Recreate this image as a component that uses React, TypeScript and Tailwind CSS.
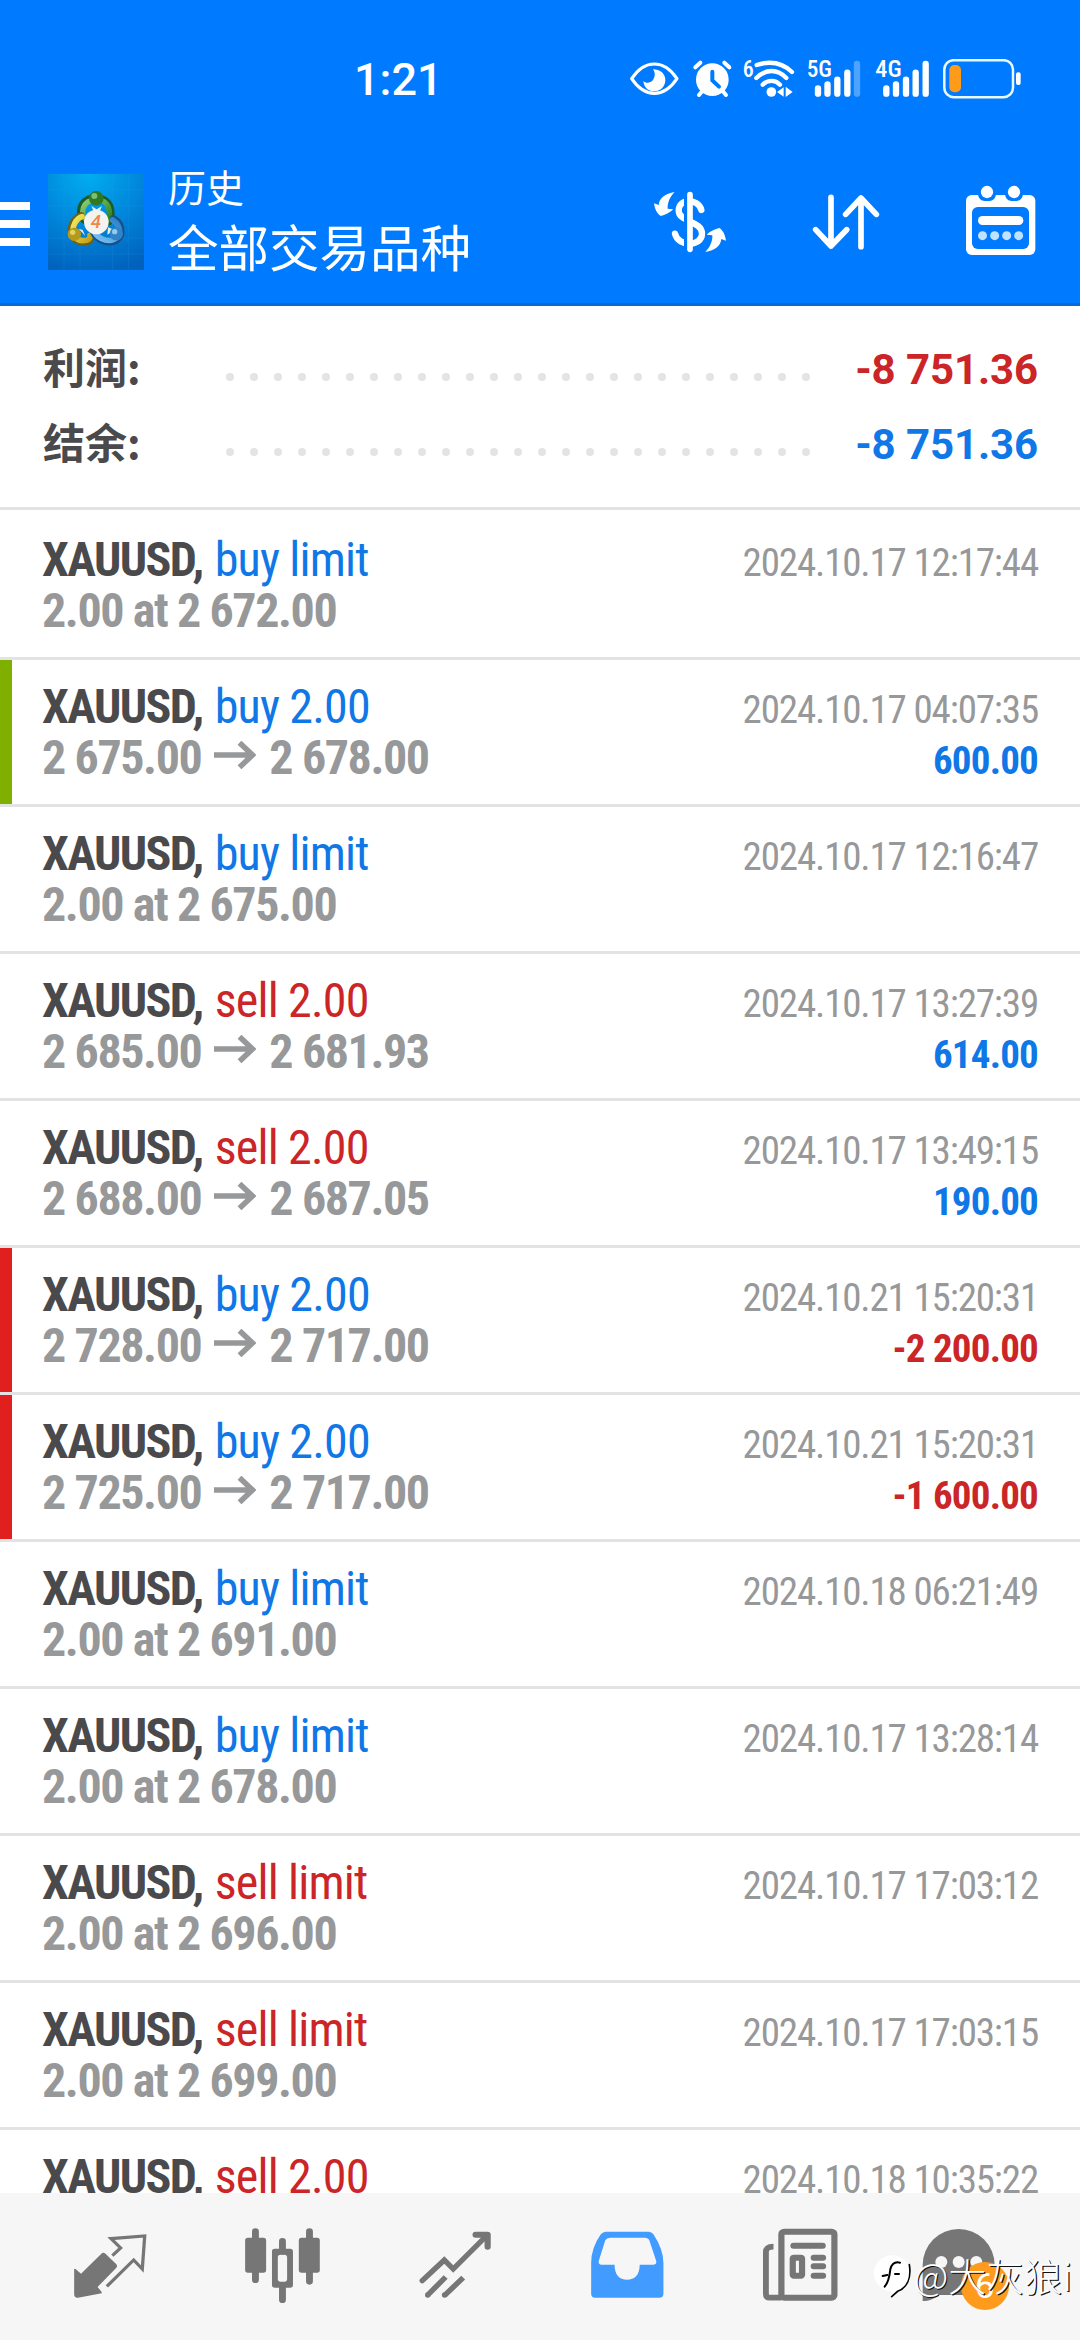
import type { ReactNode } from "react";

type Side = "buy" | "sell";
type Bar = "none" | "green" | "red";

interface Deal {
  side: Side;
  label: string;
  time: string;
  price: string;
  close?: string;
  profit?: string;
  bar?: Bar;
}

const deals: Deal[] = [
  { side: "buy", label: "buy limit", time: "2024.10.17 12:17:44", price: "2.00 at 2 672.00" },
  { side: "buy", label: "buy 2.00", time: "2024.10.17 04:07:35", price: "2 675.00", close: "2 678.00", profit: "600.00", bar: "green" },
  { side: "buy", label: "buy limit", time: "2024.10.17 12:16:47", price: "2.00 at 2 675.00" },
  { side: "sell", label: "sell 2.00", time: "2024.10.17 13:27:39", price: "2 685.00", close: "2 681.93", profit: "614.00" },
  { side: "sell", label: "sell 2.00", time: "2024.10.17 13:49:15", price: "2 688.00", close: "2 687.05", profit: "190.00" },
  { side: "buy", label: "buy 2.00", time: "2024.10.21 15:20:31", price: "2 728.00", close: "2 717.00", profit: "-2 200.00", bar: "red" },
  { side: "buy", label: "buy 2.00", time: "2024.10.21 15:20:31", price: "2 725.00", close: "2 717.00", profit: "-1 600.00", bar: "red" },
  { side: "buy", label: "buy limit", time: "2024.10.18 06:21:49", price: "2.00 at 2 691.00" },
  { side: "buy", label: "buy limit", time: "2024.10.17 13:28:14", price: "2.00 at 2 678.00" },
  { side: "sell", label: "sell limit", time: "2024.10.17 17:03:12", price: "2.00 at 2 696.00" },
  { side: "sell", label: "sell limit", time: "2024.10.17 17:03:15", price: "2.00 at 2 699.00" },
  { side: "sell", label: "sell 2.00", time: "2024.10.18 10:35:22", price: "" },
];

const barClass: Record<Bar, string> = {
  none: "bg-transparent",
  green: "bg-[#7fb000]",
  red: "bg-[#e11f1f]",
};

function StatusBar() {
  return (
    <div className="flex h-[120px] items-start text-white">
      <div className="ml-[354px] mt-[52px] w-[275px] font-['Roboto'] text-[45px] font-medium leading-[56px] tracking-[0px]">1:21</div>
      {/* eye comfort */}
      <svg className="mt-[59px] h-10 w-[60.67px] shrink-0" viewBox="88 58 182 120" fill="none">
        <path d="M96 117 C118 84 140 73 164 73 C188 73 210 84 232 117 C210 150 188 161 164 161 C140 161 118 150 96 117Z" stroke="#fff" strokeWidth="9.5" strokeLinejoin="round" />
        <path d="M160 89 C185 90 197 104 197 121 C197 141 182 155 163 155 C145 155 133 143 131 124 C138 132 152 131 160 121 C167 111 167 98 160 89Z" fill="#fff" />
      </svg>
      {/* alarm */}
      <svg className="mt-[59px] h-10 w-[51.67px] shrink-0" viewBox="270 58 155 120" fill="none" strokeLinecap="round">
        <path d="M286 83 L301 69 M388 83 L373 69" stroke="#fff" strokeWidth="12" />
        <path d="M297 166 L312 148 M378 166 L363 148" stroke="#fff" strokeWidth="12" />
        <circle cx="337" cy="120" r="49" fill="#fff" />
        <path d="M337 96 V122 L357 141" stroke="#007aff" strokeWidth="12" />
      </svg>
      {/* wifi */}
      <svg className="mt-[59px] h-10 w-[61.67px] shrink-0 overflow-visible" viewBox="425 58 185 120" fill="none">
        <text x="430" y="111" fill="#fff" fontFamily="Roboto Condensed" fontWeight="500" fontSize="70" textLength="33" lengthAdjust="spacingAndGlyphs">6</text>
        <path d="M472 76 C512 63 550 70 578 97" stroke="#fff" strokeWidth="13" strokeLinecap="round" />
        <path d="M471 115 C500 87 534 87 561 115" stroke="#fff" strokeWidth="13" strokeLinecap="round" />
        <path d="M490 135 C505 120 528 120 542 135" stroke="#fff" strokeWidth="13" strokeLinecap="round" />
        <circle cx="516" cy="157" r="14.5" fill="#fff" />
        <path d="M533 157 L553 143 V171Z M559 141 L580 157 L559 172Z" fill="#fff" />
      </svg>
      {/* 5G */}
      <svg className="mt-[59px] h-10 w-[66.67px] shrink-0 overflow-visible" viewBox="610 58 200 120" fill="none" stroke="#fff" strokeWidth="19" strokeLinecap="round">
        <text x="621" y="112" stroke="none" fill="#fff" fontFamily="Roboto Condensed" fontWeight="500" fontSize="70" textLength="76" lengthAdjust="spacingAndGlyphs">5G</text>
        <path d="M655 146 V162 M683.500 134 V162 M713 120 V162 M743 99 V162" />
        <path d="M772 73 V162" stroke="#4ea3ff" />
      </svg>
      {/* 4G */}
      <svg className="mt-[59px] h-10 w-[70px] shrink-0 overflow-visible" viewBox="810 58 210 120" fill="none" stroke="#fff" strokeWidth="19" strokeLinecap="round">
        <text x="826" y="112" stroke="none" fill="#fff" fontFamily="Roboto Condensed" fontWeight="500" fontSize="70" textLength="79" lengthAdjust="spacingAndGlyphs">4G</text>
        <path d="M859 146 V162 M888 134 V162 M918 120 V162 M947 99 V162 M977 73 V162" />
      </svg>
      {/* battery */}
      <svg className="mt-[59px] h-10 w-[83.33px] shrink-0" viewBox="1020 58 250 120" fill="none">
        <rect x="1033" y="61.500" width="206" height="111" rx="28" stroke="#e8faff" strokeWidth="7.500" />
        <rect x="1048" y="76" width="35" height="82" rx="15" fill="#ff9b1a" />
        <rect x="1248" y="98" width="14" height="38" rx="6" fill="#fff" />
      </svg>
    </div>
  );
}

function AppLogo() {
  return (
    <svg className="ml-[18px] mt-3 size-24 shrink-0" viewBox="144 72 288 288">
      <defs>
        <radialGradient id="sky" cx="0.42" cy="0" r="1.05">
          <stop offset="0" stopColor="#00aef0" />
          <stop offset="0.5" stopColor="#0088dc" />
          <stop offset="1" stopColor="#0062bd" />
        </radialGradient>
        <linearGradient id="green" x1="0" y1="0" x2="1" y2="1">
          <stop offset="0" stopColor="#8fd07c" />
          <stop offset="1" stopColor="#2a7f1d" />
        </linearGradient>
        <linearGradient id="gold" x1="0" y1="0" x2="1" y2="1">
          <stop offset="0" stopColor="#f6ec62" />
          <stop offset="1" stopColor="#c4a112" />
        </linearGradient>
        <linearGradient id="azure" x1="1" y1="0" x2="0" y2="1">
          <stop offset="0" stopColor="#2a7fc8" />
          <stop offset="1" stopColor="#7cc4f4" />
        </linearGradient>
      </defs>
      <rect x="144" y="72" width="288" height="288" fill="url(#sky)" />
      <path d="M192 72V360M240 72V360M338 72V360M386 72V360M144 120H432M144 168H432M144 264H432M144 312H432" stroke="#2aa0e8" strokeOpacity="0.18" strokeWidth="3" />
      <g fill="none" strokeLinecap="round">
        <path d="M262 214 C243 212 238 188 243 171 C250 152 268 143 290 143 C314 143 330 160 333 180 C335 192 334 205 328 215" stroke="#1d5c22" strokeWidth="20" />
        <path d="M262 208 C247 206 246 188 250 174 C256 157 270 149 290 149 C312 149 325 163 328 182 C329 192 329 202 325 210" stroke="url(#green)" strokeWidth="16" />
        <path d="M244 196 C222 204 212 224 212 246 C214 270 238 280 262 276 C272 274 277 266 274 258" stroke="#6f6015" strokeWidth="19" />
        <path d="M246 200 C228 206 218 226 218 246 C220 266 240 275 260 271 C268 269 272 262 270 256" stroke="url(#gold)" strokeWidth="17" />
        <path d="M340 204 C358 214 366 232 364 252 C358 274 336 280 314 275 C296 270 284 258 279 246" stroke="#174f8c" strokeWidth="19" />
        <path d="M338 210 C354 220 360 234 358 250 C352 268 334 274 316 270 C300 266 289 256 283 246" stroke="url(#azure)" strokeWidth="17" />
      </g>
      <path d="M236 236 L256 258 L248 240Z M324 232 L344 240 L322 254Z M274 168 L290 178 L306 168 L300 182 H280Z" fill="#dfeee4" />
      <circle cx="289" cy="145" r="22" fill="#2d7a22" />
      <circle cx="283" cy="138" r="9" fill="#9ad48b" opacity="0.75" />
      <circle cx="223" cy="253" r="20" fill="#b39a1d" />
      <circle cx="218" cy="247" r="8" fill="#f1e47a" opacity="0.75" />
      <circle cx="349" cy="251" r="20" fill="#2f83c6" />
      <circle cx="344" cy="245" r="8" fill="#b5e0fa" opacity="0.75" />
      <circle cx="289" cy="216" r="37" fill="#f4f3f0" />
      <text x="288" y="235" textAnchor="middle" fill="#f0884c" fontFamily="Roboto" fontStyle="italic" fontWeight="500" fontSize="56">4</text>
    </svg>
  );
}

function AppBar() {
  return (
    <div className="flex h-[186px] items-start border-b-[3px] border-[#0a6bd6] pt-[42px] text-white">
      <div className="mt-10 flex w-[30px] shrink-0 flex-col gap-[10px]">
        <div className="h-2 bg-white" />
        <div className="h-2 bg-white" />
        <div className="h-2 bg-white" />
      </div>
      <AppLogo />
      <div className="ml-[24px] w-[482px] font-['Noto_Sans_CJK_SC',sans-serif]">
        <div className="text-[38px] leading-[48px]">历史</div>
        <div className="text-[50.5px] leading-[71px]">全部交易品种</div>
      </div>
      <svg className="mt-[18px] h-20 w-20 shrink-0" viewBox="90 60 240 240" fill="none">
        <path d="M244 150 C236 116 176 112 176 152 C176 186 246 182 246 221 C246 260 174 262 165 221" stroke="#fff" strokeWidth="19" strokeLinecap="round" />
        <rect x="192" y="96" width="12" height="180" fill="#007aff" />
        <path d="M210 104 V268" stroke="#fff" strokeWidth="17" strokeLinecap="round" />
        <path d="M164 96 C135 100 118 115 116 135 L102 130 C105 150 112 162 122 168 C135 165 150 158 160 148 L143 146 C142 128 150 110 164 96Z" fill="#fff" />
        <path d="M256 276 C285 272 302 257 304 237 L318 242 C315 222 308 210 298 204 C285 207 270 214 260 224 L277 226 C278 244 270 262 256 276Z" fill="#fff" />
      </svg>
      <svg className="ml-[75px] mt-[18px] h-20 w-20 shrink-0" viewBox="555 60 240 240" fill="none" stroke="#fff" strokeWidth="17" strokeLinecap="round" strokeLinejoin="round">
        <path d="M633 112 V258 M587 209 L633 258 L680 209" />
        <path d="M723 260 V114 M677 163 L723 114 L769 163" />
      </svg>
      <svg className="ml-[75px] mt-[18px] h-20 w-20 shrink-0" viewBox="1020 60 240 240">
        <rect x="1038" y="105" width="208" height="180" rx="17" fill="#fff" />
        <path d="M1074 100 H1128 C1128 116 1118 123 1108 123 H1094 C1084 123 1074 116 1074 100Z M1155 100 H1209 C1209 116 1199 123 1189 123 H1175 C1165 123 1155 116 1155 100Z" fill="#007aff" />
        <circle cx="1101" cy="96" r="18.500" fill="#fff" />
        <circle cx="1182" cy="96" r="18.500" fill="#fff" />
        <rect x="1056" y="141" width="171" height="126" rx="17" fill="#007aff" />
        <rect x="1074" y="168" width="136" height="27" rx="13.500" fill="#fff" />
        <g fill="#bfe2ff">
          <circle cx="1087.500" cy="227" r="13.500" />
          <circle cx="1124" cy="227" r="13.500" />
          <circle cx="1160" cy="227" r="13.500" />
          <circle cx="1196" cy="227" r="13.500" />
        </g>
      </svg>
    </div>
  );
}

function SummaryRow({ label, value, tone }: { label: string; value: string; tone: string }) {
  return (
    <div className="flex h-[75px] items-baseline pl-[43px] pr-[42px] leading-[75px]">
      <div className="w-[183px] font-['Noto_Sans_CJK_SC',sans-serif] text-[42px] font-bold text-[#4a4a4c]">{label}</div>
      <div className="flex w-[584px] -translate-y-[3px] justify-between">
        {Array.from({ length: 25 }, (_, i) => (
          <span key={i} className="size-2 rounded-full bg-[#e4e4e4]" />
        ))}
      </div>
      <div className={`ml-auto font-['Roboto'] text-[42px] font-bold tracking-[-0.1px] ${tone}`}>{value}</div>
    </div>
  );
}

function DealRow({ deal, first }: { deal: Deal; first: boolean }) {
  return (
    <div className={`flex shrink-0 border-b-[3px] border-[#e3e3e3] font-['Roboto_Condensed'] ${first ? "h-[150px] pt-[3px]" : "h-[147px]"}`}>
      <div className={`w-3 shrink-0 ${barClass[deal.bar ?? "none"]}`} />
      <div className="grow pl-[30px] pr-[42px] pt-[21px] leading-[51px]">
        <div className="flex h-[51px] items-baseline">
          <span className="text-[48px] font-bold tracking-[-1.6px] text-[#4a4a4c]">XAUUSD,</span>
          <span className={`ml-[12px] text-[48px] tracking-[-0.8px] ${deal.side === "buy" ? "text-[#0f77e6]" : "text-[#cb2528]"}`}>{deal.label}</span>
          <span className="ml-auto text-[39px] tracking-[-1.15px] text-[#979899]">{deal.time}</span>
        </div>
        <div className="flex h-[51px] items-baseline text-[48px] font-bold tracking-[-1.4px] text-[#979899]">
          <span>{deal.price}</span>
          {deal.close && (
            <>
              <svg className="ml-[13px] h-7 w-[42px] -translate-y-[5px]" viewBox="0 0 42 28" fill="none" stroke="#979899" strokeWidth="5.500">
                <path d="M0 14 H38 M25.500 1.700 L38.500 14 L25.500 26.300" />
              </svg>
              <span className="ml-[13px]">{deal.close}</span>
            </>
          )}
          {deal.profit && (
            <span className={`ml-auto text-[39px] tracking-[-0.8px] ${deal.profit.startsWith("-") ? "text-[#cb2528]" : "text-[#0f77e6]"}`}>{deal.profit}</span>
          )}
        </div>
      </div>
    </div>
  );
}

function NavIcon({ box, children }: { box: string; children: ReactNode }) {
  return (
    <div className="flex justify-center">
      <svg className="h-[90px] w-[82.6px] overflow-visible" viewBox={box} preserveAspectRatio="none" fill="none">
        {children}
      </svg>
    </div>
  );
}

function NavBar() {
  return (
    <div className="relative grid h-[147px] shrink-0 grid-cols-6 bg-[#f6f6f6] pl-6 pr-[22px] pt-[30px]">
      <NavIcon box="200 370 240 270">
        <path d="M215 508 L218 507 L235 522 L294 462 Q300 457 306 462 L337 493 Q342 499 337 505 L283 562 L295 577 V581 L226 594 Q215 595 215 584Z" fill="#767676" />
        <path d="M326 468 L350 445 L322 417 L420 409 L413 508 L388 481 L310 560" stroke="#767676" strokeWidth="9.500" />
      </NavIcon>
      <NavIcon box="697 370 240 270">
        <path d="M739 396 V540 M817.500 425 V455 M817.500 560 V600 M896 396 V545" stroke="#767676" strokeWidth="20" strokeLinecap="round" />
        <rect x="709" y="414" width="61" height="105" rx="8" fill="#767676" />
        <rect x="865" y="414" width="61" height="105" rx="8" fill="#767676" />
        <path fillRule="evenodd" d="M795 447 H840 Q848 447 848 455 V556 Q848 564 840 564 H795 Q787 564 787 556 V455 Q787 447 795 447Z M812 465 Q804 465 804 473 V538 Q804 546 812 546 H823 Q831 546 831 538 V473 Q831 465 823 465Z" fill="#767676" />
      </NavIcon>
      <NavIcon box="1197 370 240 270">
        <g stroke="#767676" strokeWidth="16">
          <path d="M1221 543 L1285 481 L1311 508 L1410 406" strokeLinecap="round" />
          <path d="M1376 405 H1411 V441" strokeWidth="18" strokeLinecap="round" strokeLinejoin="round" />
          <path d="M1289 532 L1237 586 M1340 534 L1286 587" />
        </g>
        <circle cx="1237" cy="586" r="8" fill="#767676" />
        <circle cx="1286" cy="586" r="8" fill="#767676" />
      </NavIcon>
      <NavIcon box="131 370 240 270">
        <path fillRule="evenodd" d="M189 396 H313 Q322 396 327 404 Q356 450 356 490 V582 Q356 594 344 594 H158 Q146 594 146 582 V490 Q146 445 174 404 Q180 396 189 396Z M201 414 Q191 414 187 422 L168 484 Q166 495 176 495 H214 C214 525 228 540 250 540 C273 540 287 525 287 495 H326 Q337 495 335 484 L315 422 Q312 414 302 414Z" fill="#429bff" />
      </NavIcon>
      <NavIcon box="632 370 240 270">
        <rect x="700" y="396" width="154" height="198" rx="8" stroke="#767676" strokeWidth="18" />
        <path d="M677 441 C662 441 655 446 655 458 V582 Q655 594 666 594 H700" stroke="#767676" strokeWidth="17" />
        <path d="M735 438 H820 M794 474 H821 M794 500 H821 M794 528 H821" stroke="#767676" strokeWidth="18" strokeLinecap="round" />
        <rect x="733" y="474" width="27" height="54" rx="3" stroke="#767676" strokeWidth="18" />
      </NavIcon>
      <div className="flex justify-center">
        <svg className="h-[90px] w-20 overflow-visible" viewBox="244 9 240 270" fill="none">
          <path d="M216 135 A108 108 0 0 1 432 135 C432 190 400 225 350 225 H262 C250 238 236 243 216 243Z" fill="#767676" />
          <circle cx="272" cy="126" r="18" fill="#f6f6f6" />
          <circle cx="324" cy="126" r="18" fill="#f6f6f6" />
          <circle cx="377" cy="126" r="18" fill="#f6f6f6" />
          <circle cx="403" cy="198" r="72" fill="#ff9b1c" />
          <text x="402" y="235" textAnchor="middle" fill="#fff" fontFamily="Roboto" fontSize="106">6</text>
        </svg>
      </div>
      <div className="absolute right-[8px] top-[56px] flex items-center">
        <svg className="mr-[3px] h-[52px] w-[40px] overflow-visible" viewBox="50 105 120 156" fill="none" strokeLinecap="round">
          <circle cx="113" cy="178" r="54" fill="#fff" />
          <path d="M112 226 L108 248 L142 226" fill="#fff" />
          <path d="M165 152 C172 196 156 222 130 232 L112 248" stroke="#000" strokeWidth="5" />
          <path d="M137 146 C120 142 112 150 108 166 C105 194 100 208 91 218 M85 186 L99 183 M122 180 H134" stroke="#000" strokeWidth="6" />
        </svg>
        <span className="font-['Noto_Sans_CJK_SC',sans-serif] text-[38px] font-light leading-[52px] text-white [text-shadow:1.2px_1.2px_0.5px_#111]">@大灰狼i</span>
      </div>
    </div>
  );
}

export default function App() {
  return (
    <div className="flex h-[2340px] w-[1080px] flex-col overflow-hidden bg-white">
      <header className="shrink-0 bg-[#007aff]">
        <StatusBar />
        <AppBar />
      </header>
      <section className="h-[204px] shrink-0 border-b-[3px] border-[#e3e3e3] pt-[22px]">
        <SummaryRow label="利润:" value="-8 751.36" tone="text-[#cb2528]" />
        <SummaryRow label="结余:" value="-8 751.36" tone="text-[#0f77e6]" />
      </section>
      <main className="flex min-h-0 grow flex-col overflow-hidden">
        {deals.map((deal, i) => (
          <DealRow key={i} deal={deal} first={i === 0} />
        ))}
      </main>
      <NavBar />
    </div>
  );
}
